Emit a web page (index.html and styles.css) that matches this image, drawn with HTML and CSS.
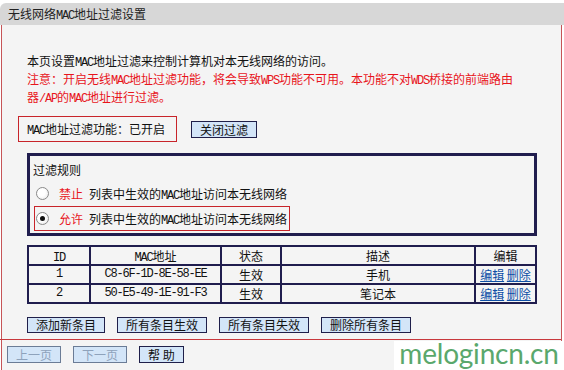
FILE: index.html
```html
<!DOCTYPE html>
<html lang="zh-CN">

<head>
    <meta charset="UTF-8">
    <title>无线网络MAC地址过滤设置</title>
    <link rel="stylesheet" href="styles.css">
</head>

<body>

    <div class="title-bar">无线网络<span class="en">MAC</span>地址过滤设置</div>

    <div class="panel">
        <div class="main">
            <div class="notes">
                <p>本页设置<span class="en">MAC</span>地址过滤来控制计算机对本无线网络的访问。</p>
                <p class="warn">注意：开启无线<span class="en">MAC</span>地址过滤功能，将会导致<span class="en">WPS</span>功能不可用。本功能不对<span class="en">WDS</span>桥接的前端路由</p>
                <p class="warn">器<span class="en">/AP</span>的<span class="en">MAC</span>地址进行过滤。</p>
            </div>

            <div class="status-row">
                <div class="status-box"><span class="en">MAC</span>地址过滤功能：已开启</div>
                <button class="btn">关闭过滤</button>
            </div>

            <div class="rule-box">
                <div class="rule-title">过滤规则</div>
                <div class="rule-row">
                    <span class="radio"></span>
                    <span class="rule-key">禁止</span>
                    <span>列表中生效的<span class="en">MAC</span>地址访问本无线网络</span>
                </div>
                <div class="rule-row marked">
                    <span class="radio checked"></span>
                    <span class="rule-key">允许</span>
                    <span>列表中生效的<span class="en">MAC</span>地址访问本无线网络</span>
                </div>
            </div>

            <table class="mac-table">
                <tr>
                    <td class="c-id"><span class="en">ID</span></td>
                    <td class="c-mac"><span class="en">MAC</span>地址</td>
                    <td class="c-state">状态</td>
                    <td class="c-desc">描述</td>
                    <td class="c-edit">编辑</td>
                </tr>
                <tr>
                    <td class="en">1</td>
                    <td class="en">C8-6F-1D-8E-58-EE</td>
                    <td>生效</td>
                    <td>手机</td>
                    <td><a href="#">编辑</a> <a href="#">删除</a></td>
                </tr>
                <tr>
                    <td class="en">2</td>
                    <td class="en">50-E5-49-1E-91-F3</td>
                    <td>生效</td>
                    <td>笔记本</td>
                    <td><a href="#">编辑</a> <a href="#">删除</a></td>
                </tr>
            </table>

            <div class="actions">
                <button class="btn">添加新条目</button>
                <button class="btn">所有条目生效</button>
                <button class="btn">所有条目失效</button>
                <button class="btn">删除所有条目</button>
            </div>
        </div>

        <div class="footer">
            <button class="btn off">上一页</button>
            <button class="btn off">下一页</button>
            <button class="btn">帮 助</button>
        </div>
    </div>

    <div class="watermark">melogincn.cn</div>

</body>

</html>
```

FILE: styles.css
```css
body {
    margin: 0;
    width: 564px;
    height: 370px;
    overflow: hidden;
    position: relative;
    background: #fff;
    color: #111;
    font-family: "Noto Sans CJK SC", sans-serif;
    font-size: 12px;
}

.en {
    font-family: "Liberation Mono", monospace;
    font-size: 12px;
    letter-spacing: -1.2px;
}

span.en {
    line-height: 0;
}

.title-bar {
    margin-top: 3px;
    height: 22px;
    line-height: 22px;
    padding-left: 8px;
    background: #d7d7d7;
    border-top-left-radius: 6px;
    color: #222;
}

.panel {
    margin-left: 1px;
    width: 559px;
    height: 345px;
    border-left: 1px solid #c65457;
    border-right: 1px solid #c65457;
    background: #f4f4f4;
}

.main {
    padding: 27px 0 6px 0;
}

.notes {
    padding-left: 25px;
}

.notes p {
    margin: 0;
    height: 18px;
    line-height: 18px;
    white-space: nowrap;
}

.notes .warn {
    color: #e8141c;
}

.status-row {
    display: flex;
    align-items: center;
    gap: 14px;
    margin: 10px 0 0 16px;
}

.status-box {
    width: 149px;
    height: 24px;
    line-height: 24px;
    padding-left: 8px;
    border: 1px solid #c8242a;
}

.btn {
    height: 17px;
    padding: 0 8px;
    border: 1px solid #1f1f4a;
    background: #d3e5f8;
    color: #111;
    font-family: "Noto Sans CJK SC", sans-serif;
    font-size: 12px;
    line-height: 15px;
    white-space: pre;
}

.btn.off {
    border-color: #6b7c96;
    color: #8ea2bb;
}

.rule-box {
    margin: 11px 0 0 25px;
    width: 504px;
    height: 72px;
    border: 3px solid #201d4e;
    padding: 5px 0 0 0;
}

.rule-title {
    height: 18px;
    line-height: 18px;
    padding-left: 3px;
}

.rule-row {
    display: flex;
    align-items: center;
    width: 254px;
    height: 23px;
    margin: 2px 0 0 4px;
    border: 1px solid transparent;
}

.rule-row.marked {
    margin-top: 0;
    border-color: #c8242a;
}

.radio {
    width: 11px;
    height: 11px;
    margin-left: 1px;
    border: 1px solid #8a8a8a;
    border-radius: 50%;
    background: radial-gradient(circle at 40% 40%, #fff 40%, #e4e4e4 100%);
    display: flex;
    align-items: center;
    justify-content: center;
}

.radio.checked::after {
    content: "";
    width: 5px;
    height: 5px;
    border-radius: 50%;
    background: #111;
}

.rule-key {
    color: #e8141c;
    margin: 0 6px 0 10px;
}

.mac-table {
    margin: 9px 0 0 25px;
    width: 510px;
    border-collapse: collapse;
    border: 2px solid #201d4e;
}

.mac-table td {
    border: 2px solid #201d4e;
    padding: 0;
    height: 17px;
    line-height: 17px;
    text-align: center;
}

.mac-table .c-id { width: 60px; }
.mac-table .c-mac { width: 129px; }
.mac-table .c-state { width: 58px; }
.mac-table .c-desc { width: 192px; }

.mac-table a {
    color: #0d4fa6;
    text-decoration: underline;
}

.actions {
    display: flex;
    gap: 12px;
    margin: 13px 0 0 25px;
}

.actions .btn {
    height: 16px;
    line-height: 14px;
}

.footer {
    border-top: 1px solid #c8383c;
    margin-left: -2px;
    padding: 6px 0 0 7px;
    display: flex;
    gap: 12px;
}

.footer .btn {
    height: 17px;
}

.watermark {
    position: absolute;
    right: 0;
    bottom: 0;
    width: 170px;
    height: 29px;
    background: #fff;
    color: #5aa86c;
    font-family: "Lato", sans-serif;
    font-size: 28px;
    line-height: 24px;
    text-align: center;
    letter-spacing: -0.2px;
}
```
